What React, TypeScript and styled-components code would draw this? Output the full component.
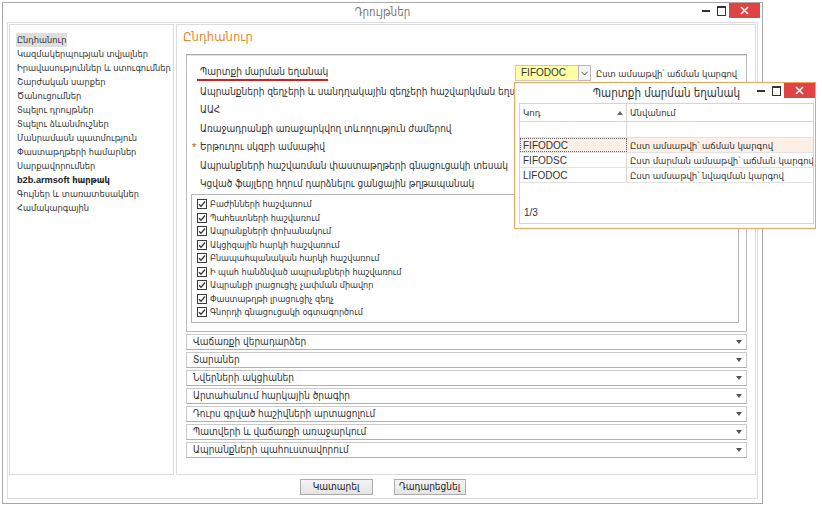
import React from "react";
import styled, { createGlobalStyle } from "styled-components";

const Global = createGlobalStyle`
  html, body { margin: 0; padding: 0; background: #fff; }
  body {
    font-family: "Liberation Sans", "DejaVu Sans Condensed", "DejaVu Sans", sans-serif;
    font-size: 10px;
    color: #333;
  }
  * { box-sizing: border-box; }
`;

const Page = styled.div`
  position: relative;
  width: 822px;
  height: 509px;
  padding: 2px 0 0 2px;
`;

const Window = styled.div`
  width: 761px;
  height: 502px;
  border: 1px solid #a8a8a8;
  background: #fff;
  display: flex;
  flex-direction: column;
`;

const TitleBar = styled.div<{ $h: number }>`
  height: ${(p) => p.$h}px;
  flex: none;
  display: grid;
  grid-template-columns: 1fr auto 1fr;
  align-items: start;
`;

const TitleText = styled.div<{ $size: number; $color: string; $lh: number }>`
  grid-column: 2;
  font-size: ${(p) => p.$size}px;
  line-height: ${(p) => p.$lh}px;
  color: ${(p) => p.$color};
  white-space: nowrap;
`;

const Controls = styled.div<{ $mr: number }>`
  grid-column: 3;
  justify-self: end;
  display: flex;
  align-items: flex-start;
  margin-right: ${(p) => p.$mr}px;
`;

const MinBtn = styled.div`
  width: 15px;
  height: 14px;
  position: relative;
  &::after {
    content: "";
    position: absolute;
    left: 3px;
    top: 7px;
    width: 8px;
    height: 2px;
    background: #333;
  }
`;

const MaxBtn = styled.div`
  width: 14px;
  height: 14px;
  position: relative;
  &::after {
    content: "";
    position: absolute;
    left: 3px;
    top: 3px;
    width: 7px;
    height: 7px;
    border: 1px solid #333;
    border-top-width: 2px;
  }
`;

const CloseBtn = styled.div`
  width: 31px;
  height: 15px;
  background: #e04343;
  display: flex;
  align-items: center;
  justify-content: center;
  margin-left: 1px;
`;

const Frame = styled.div`
  flex: 1;
  margin: 0 4px 4px 4px;
  border: 1px solid #dcdcdc;
  padding: 1px;
  display: flex;
  flex-direction: column;
`;

const Main = styled.div`
  height: 451px;
  flex: none;
  display: flex;
  gap: 2px;
`;

const Nav = styled.div`
  width: 165px;
  flex: none;
  border: 1px solid #dcdcdc;
  padding: 8px 0 0 6px;
  font-size: 9.2px;
`;

const NavItem = styled.div<{ $active?: boolean; $bold?: boolean }>`
  height: 14px;
  line-height: 14px;
  white-space: nowrap;
  font-weight: ${(p) => (p.$bold ? 700 : 400)};
  color: ${(p) => (p.$bold ? "#222" : "#333")};
  span {
    display: inline-block;
    padding: 0 1px;
    background: ${(p) => (p.$active ? "#dedede" : "transparent")};
  }
`;

const Content = styled.div`
  flex: 1;
  border: 1px solid #dcdcdc;
  padding: 2px 8px 0 6px;
  display: flex;
  flex-direction: column;
`;

const SectionTitle = styled.div`
  font-size: 13px;
  line-height: 20px;
  color: #f0842c;
`;

const GroupBox = styled.div`
  margin: 7px 0 0 3px;
  border: 1px solid #bdbdbd;
  border-top-color: #a9a9a9;
  box-shadow: inset 0 1px 0 #e2e2e2;
  padding: 9px 0 8px 0;
`;

const SettingRow = styled.div`
  height: 18.5px;
  display: grid;
  grid-template-columns: 8px 315px auto 1fr;
  align-items: center;
  padding-left: 5px;
  white-space: nowrap;
`;

const Asterisk = styled.span`
  color: #e53935;
  font-size: 11px;
  line-height: 10px;
  align-self: center;
`;

const Label = styled.span<{ $marked?: boolean }>`
  justify-self: start;
  display: inline-block;
  line-height: 14px;
  ${(p) =>
    p.$marked
      ? `border-bottom: 2px solid #e0191b; width: 131px; margin-left: -3px; padding-left: 3px;`
      : ""}
`;

const Combo = styled.div`
  display: flex;
  height: 16px;
`;

const ComboField = styled.div`
  width: 63px;
  background: #ffffa6;
  border: 1px solid #c9c9c9;
  border-right: none;
  padding-left: 5px;
  line-height: 14px;
`;

const ComboButton = styled.div`
  width: 13px;
  border: 1px solid #b8b8b8;
  background: #f4f4f4;
  display: flex;
  align-items: center;
  justify-content: center;
`;

const ValueText = styled.span`
  margin-left: 5px;
  font-size: 9.4px;
`;

const CheckGroup = styled.div`
  margin: 0 7px 0 4px;
  border: 1px solid #b4b4b4;
  padding: 3px 0 2.5px 5px;
  font-size: 9px;
`;

const CheckRow = styled.div`
  height: 13.5px;
  display: flex;
  align-items: center;
  gap: 3px;
  white-space: nowrap;
`;

const Box = styled.span`
  width: 10px;
  height: 10px;
  border: 1px solid #3a3a3a;
  background: #fff;
  display: inline-flex;
  align-items: center;
  justify-content: center;
  flex: none;
`;

const AccordionList = styled.div`
  margin: 2px 0 0 3px;
  display: flex;
  flex-direction: column;
  gap: 2px;
`;

const AccordionRow = styled.div`
  height: 16px;
  border: 1px solid #cacaca;
  border-bottom-color: #b0b0b0;
  display: flex;
  align-items: center;
  justify-content: space-between;
  padding: 0 4px 0 6px;
  white-space: nowrap;
`;

const Caret = styled.span`
  width: 0;
  height: 0;
  border-left: 3.5px solid transparent;
  border-right: 3.5px solid transparent;
  border-top: 4px solid #555;
`;

const Footer = styled.div`
  flex: 1;
  display: flex;
  justify-content: center;
  align-items: flex-start;
  gap: 21px;
  padding-top: 4px;
`;

const Button = styled.div<{ $w: number }>`
  width: ${(p) => p.$w}px;
  height: 16px;
  border: 1px solid #acacac;
  background: linear-gradient(#f4f4f4, #e4e4e4);
  display: flex;
  align-items: center;
  justify-content: center;
  line-height: 14px;
  color: #222;
`;

/* Popup lookup window */
const Popup = styled.div`
  position: absolute;
  left: 514px;
  top: 82px;
  width: 302px;
  height: 147px;
  border: 1px solid #f4a25c;
  background: #fff;
  display: flex;
  flex-direction: column;
  padding: 0 1px 4px 4px;
`;

const Grid = styled.div`
  flex: 1;
  border: 1px solid #d4d4d4;
  display: flex;
  flex-direction: column;
  font-size: 9.5px;
`;

const GridRow = styled.div<{ $h: number; $bg?: string; $line?: string }>`
  height: ${(p) => p.$h}px;
  flex: none;
  display: grid;
  grid-template-columns: 107px 1fr;
  background: ${(p) => p.$bg || "transparent"};
  border-bottom: 1px solid ${(p) => p.$line || "#e2e2e2"};
`;

const Cell = styled.div<{ $focus?: boolean }>`
  border-right: 1px solid #d8d8d8;
  padding-left: 3px;
  display: flex;
  align-items: center;
  justify-content: space-between;
  white-space: nowrap;
  overflow: hidden;
  ${(p) => (p.$focus ? `outline: 1px dotted #666; outline-offset: -1px;` : "")}
  &:last-child { border-right: none; }
`;

const Latin = styled.span`
  font-size: 10px;
`;

const SortCaret = styled.span`
  width: 0;
  height: 0;
  margin-right: 3px;
  border-left: 3.5px solid transparent;
  border-right: 3.5px solid transparent;
  border-bottom: 4px solid #666;
`;

const GridSpacer = styled.div`
  flex: 1;
`;

const GridFooter = styled.div`
  height: 16px;
  padding-left: 4px;
  line-height: 12px;
  font-size: 10px;
`;

const Check = () => (
  <Box>
    <svg width="8" height="8" viewBox="0 0 8 8">
      <path d="M1 4.2 L3 6.3 L7 1.5" fill="none" stroke="#333" strokeWidth="1.3" />
    </svg>
  </Box>
);

const XIcon = () => (
  <svg width="9" height="9" viewBox="0 0 9 9">
    <path d="M1 1 L8 8 M8 1 L1 8" stroke="#fff" strokeWidth="1.6" />
  </svg>
);

const navItems = [
  "Ընդհանուր",
  "Կազմակերպության տվյալներ",
  "Իրավասություններ և ստուգումներ",
  "Շարժական սարքեր",
  "Ծանուցումներ",
  "Տպելու դրույթներ",
  "Տպելու ձևանմուշներ",
  "Մանրամասն պատմություն",
  "Փաստաթղթերի համարներ",
  "Սարքավորումներ",
  "b2b.armsoft հարթակ",
  "Գույներ և տառատեսակներ",
  "Համակարգային",
];

const settings = [
  "Պարտքի մարման եղանակ",
  "Ապրանքների զեղչերի և սանդղակային զեղչերի հաշվարկման եղանակ",
  "ԱԱՀ",
  "Առաջադրանքի առաջարկվող տևողություն ժամերով",
  "Երթուղու սկզբի ամսաթիվ",
  "Ապրանքների հաշվառման փաստաթղթերի գնացուցակի տեսակ",
  "Կցված ֆայլերը հղում դարձնելու ցանցային թղթապանակ",
];

const checks = [
  "Բաժինների հաշվառում",
  "Պահեստների հաշվառում",
  "Ապրանքների փոխանակում",
  "Ակցիզային հարկի հաշվառում",
  "Բնապահպանական հարկի հաշվառում",
  "Ի պահ հանձնված ապրանքների հաշվառում",
  "Ապրանքի լրացուցիչ չափման միավոր",
  "Փաստաթղթի լրացուցիչ զեղչ",
  "Գնորդի գնացուցակի օգտագործում",
];

const sections = [
  "Վաճառքի վերադարձեր",
  "Տարաներ",
  "Նվերների ակցիաներ",
  "Արտահանում հարկային ծրագիր",
  "Դուրս գրված հաշիվների արտացոլում",
  "Պատվերի և վաճառքի առաջարկում",
  "Ապրանքների պահուստավորում",
];

const rows = [
  ["FIFODOC", "Ըստ ամսաթվի՝ աճման կարգով"],
  ["FIFODSC", "Ըստ մարման ամսաթվի՝ աճման կարգով"],
  ["LIFODOC", "Ըստ ամսաթվի՝ նվազման կարգով"],
];

export default function App() {
  return (
    <Page>
      <Global />
      <Window>
        <TitleBar $h={19}>
          <TitleText $size={11.5} $color="#7a7a7a" $lh={19}>
            Դրույթներ
          </TitleText>
          <Controls $mr={2}>
            <MinBtn />
            <MaxBtn />
            <CloseBtn>
              <XIcon />
            </CloseBtn>
          </Controls>
        </TitleBar>
        <Frame>
          <Main>
            <Nav>
              {navItems.map((t, i) => (
                <NavItem key={t} $active={i === 0} $bold={i === 10}>
                  <span>{t}</span>
                </NavItem>
              ))}
            </Nav>
            <Content>
              <SectionTitle>Ընդհանուր</SectionTitle>
              <GroupBox>
                {settings.map((t, i) => (
                  <SettingRow key={t}>
                    {i === 4 ? <Asterisk>*</Asterisk> : <span />}
                    <Label $marked={i === 0}>{t}</Label>
                    {i === 0 ? (
                      <Combo>
                        <ComboField>FIFODOC</ComboField>
                        <ComboButton>
                          <svg width="7" height="5" viewBox="0 0 7 5">
                            <path d="M0.5 0.8 L3.5 4 L6.5 0.8" fill="none" stroke="#555" strokeWidth="1" />
                          </svg>
                        </ComboButton>
                      </Combo>
                    ) : (
                      <span />
                    )}
                    {i === 0 ? <ValueText>Ըստ ամսաթվի՝ աճման կարգով</ValueText> : <span />}
                  </SettingRow>
                ))}
                <CheckGroup>
                  {checks.map((t) => (
                    <CheckRow key={t}>
                      <Check />
                      <span>{t}</span>
                    </CheckRow>
                  ))}
                </CheckGroup>
              </GroupBox>
              <AccordionList>
                {sections.map((t) => (
                  <AccordionRow key={t}>
                    <span>{t}</span>
                    <Caret />
                  </AccordionRow>
                ))}
              </AccordionList>
            </Content>
          </Main>
          <Footer>
            <Button $w={73}>Կատարել</Button>
            <Button $w={72}>Դադարեցնել</Button>
          </Footer>
        </Frame>
      </Window>

      <Popup>
        <TitleBar $h={20}>
          <TitleText $size={11.5} $color="#333" $lh={20}>
            Պարտքի մարման եղանակ
          </TitleText>
          <Controls $mr={-1}>
            <MinBtn />
            <MaxBtn />
            <CloseBtn>
              <XIcon />
            </CloseBtn>
          </Controls>
        </TitleBar>
        <Grid>
          <GridRow $h={18} $line="#d4d4d4">
            <Cell>
              <span>Կոդ</span>
              <SortCaret />
            </Cell>
            <Cell>Անվանում</Cell>
          </GridRow>
          <GridRow $h={16}>
            <Cell />
            <Cell />
          </GridRow>
          {rows.map(([c, n], i) => (
            <GridRow key={c} $h={15} $bg={i === 0 ? "#fcefe5" : undefined}>
              <Cell $focus={i === 0}>
                <Latin>{c}</Latin>
              </Cell>
              <Cell>{n}</Cell>
            </GridRow>
          ))}
          <GridSpacer />
          <GridFooter>1/3</GridFooter>
        </Grid>
      </Popup>
    </Page>
  );
}
